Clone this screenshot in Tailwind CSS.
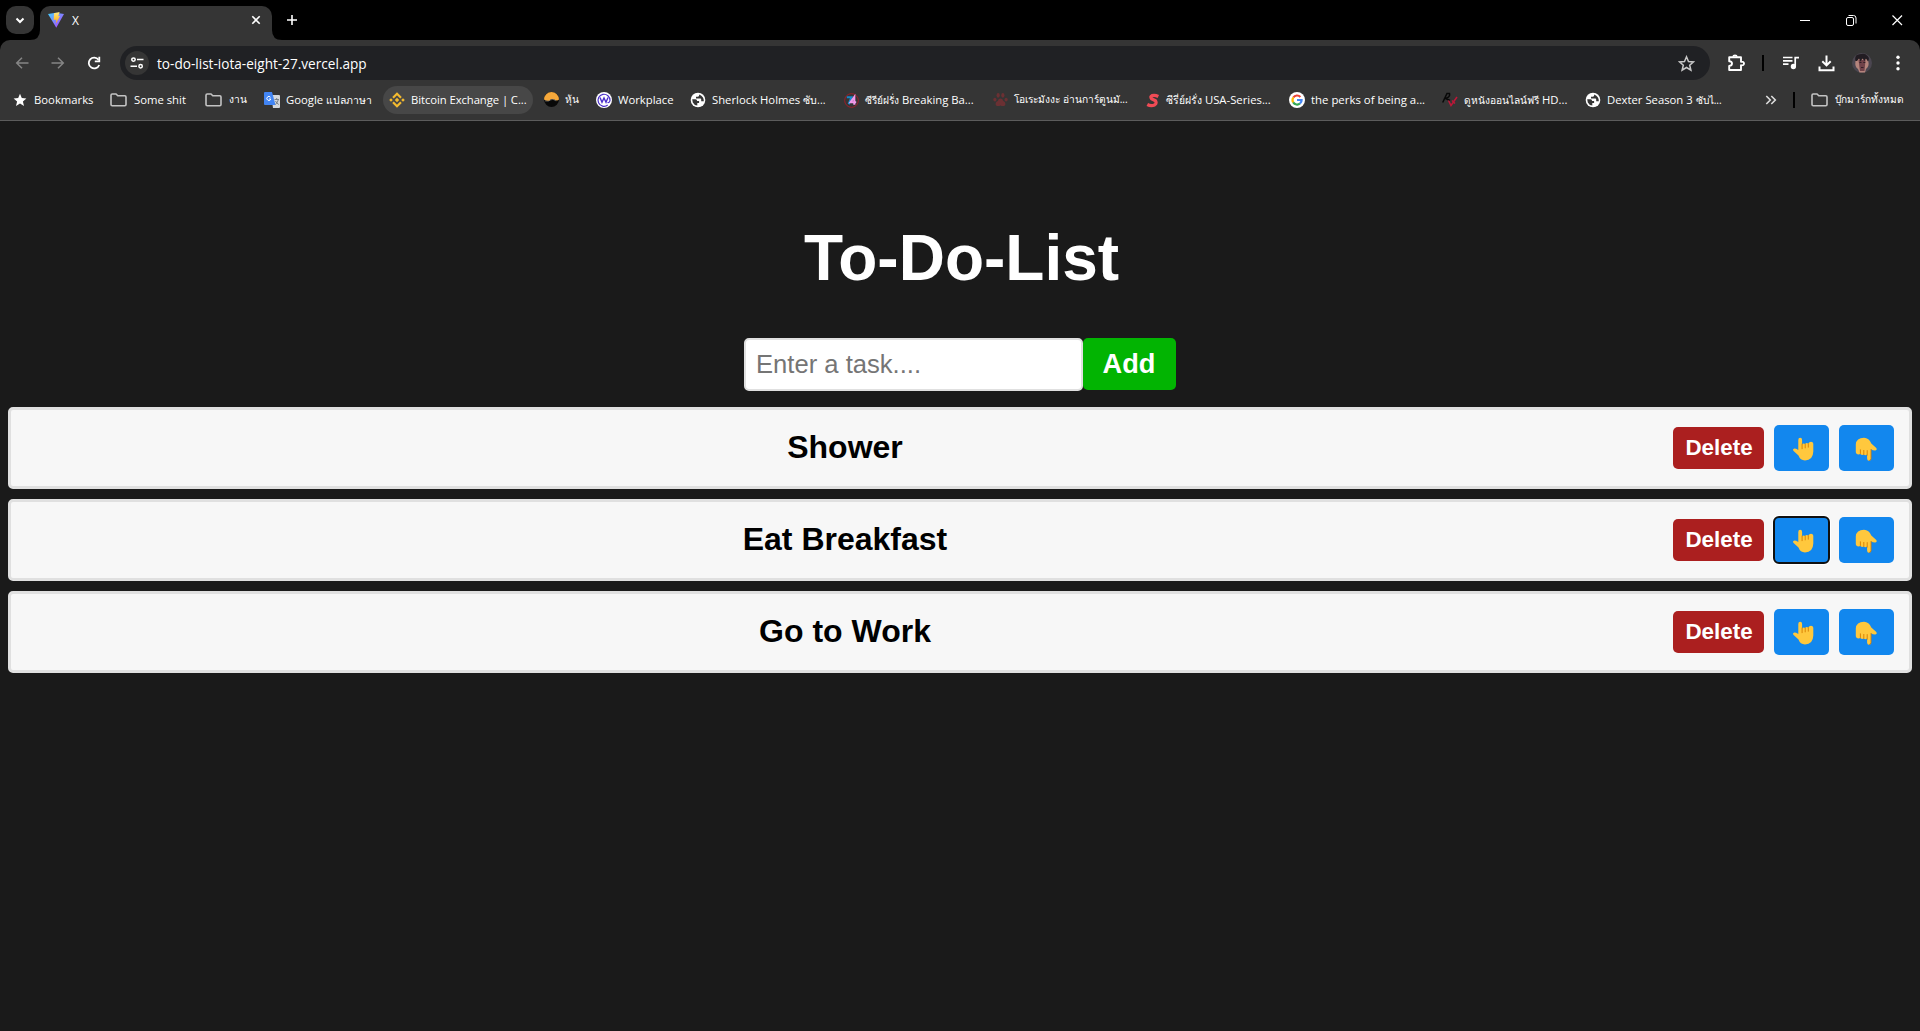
<!DOCTYPE html>
<html lang="th">
<head>
<meta charset="utf-8">
<title>X</title>
<script src="https://cdn.jsdelivr.net/npm/@tailwindcss/browser@4"></script>
</head>
<body class="flex h-[1031px] w-[1920px] flex-col overflow-hidden bg-[#1a1a1a] font-['Liberation_Sans',Arial,sans-serif]">
<svg class="absolute h-0 w-0">
  <defs>
    <linearGradient id="va" x1="0" y1="0" x2="1" y2="1"><stop offset="0" stop-color="#41d1ff"/><stop offset="1" stop-color="#bd34fe"/></linearGradient>
    <linearGradient id="vb" x1="0" y1="0" x2="0" y2="1"><stop offset="0" stop-color="#ffea83"/><stop offset="1" stop-color="#ffa800"/></linearGradient>
    <symbol id="folder" viewBox="0 0 17 14"><path d="M1 2.2Q1 1 2.2 1H6L7.8 2.8H14.8Q16 2.8 16 4V11.5Q16 12.7 14.8 12.7H2.2Q1 12.7 1 11.5Z" fill="none" stroke="#c3c3c3" stroke-width="1.6"/></symbol>
    <symbol id="globe" viewBox="0 0 16 16"><circle cx="8" cy="8" r="7.3" fill="#fff"/><path d="M2.2 7.2h3.3q1.6 0 1.6 1.7h2v2H7.3v2.6Q4.2 13.4 2.8 10.500ZM9.300 2.600q0 2.200-1.600 2.200H6v1.800h4.300q.9 0 .9 1v1.600h2.600Q14 5 9.300 2.600Z" fill="#353535"/></symbol>
    <symbol id="hand-up" viewBox="0 0 22 24"><path d="M6.300 3Q6.300 .7 8.200 .7T10.100 3V7.500Q11.300 6 13 6.900 14.600 5.400 16.200 6.600 17.700 4.300 20 5Q21.400 5.300 21.300 7V14.500Q21 23.300 13 23.500 8.200 23.300 6.500 18.500L1.300 13.800Q.3 12 2.300 11.600 4 11.600 6.300 13Z" fill="#ffc83d"/><path d="M10.100 7v4.700M13.200 7v3.900M16.300 6.600v3.600" fill="none" stroke="#d67d00" stroke-width=".9" stroke-linecap="round"/></symbol>
    <symbol id="hand-down" viewBox="0 0 22 24"><path d="M.8 7.500Q1.300 .7 9 .7 14 .8 16.300 6.500L21.300 11Q22.500 13 20.300 13.500 18 13.600 16 12.200V21.500Q15.900 23.800 14 23.800T12.100 21.500V17.600Q10.200 19.100 8.700 17.600 6.800 18.600 5.300 17 3 18 1.300 16.500 .7 15.800 .8 14Z" fill="#ffc83d"/><path d="M12.200 18.200v-4.600M8.800 17.400v-4M5.400 16.500v-3.700M16 12.500V21.500Q15.900 23.500 14.500 23.500" fill="none" stroke="#d67d00" stroke-width=".9" stroke-linecap="round"/></symbol>
  </defs>
</svg>

<header class="flex flex-col bg-black font-['Open_Sans','Noto_Sans',sans-serif] text-white">
  <!-- tab strip -->
  <div class="flex h-10 items-start">
    <button class="mt-1.5 ml-1.5 flex size-7 items-center justify-center rounded-[10px] bg-[#353535]"><svg class="size-3" viewBox="0 0 12 12" fill="none" stroke="#fff" stroke-width="2"><path d="M2.500 4.500 6 8l3.500-3.500"/></svg></button>
    <svg class="mt-[30px] ml-[-4px] h-2.5 w-2.5 self-start" viewBox="0 0 10 10"><path d="M10 0V10H0Q10 10 10 0Z" fill="#353535"/></svg>
    <div class="mt-1.5 flex h-[34px] w-[232px] items-center rounded-t-[10px] bg-[#353535] pl-2 pr-[9px] pb-1.5">
      <svg class="h-4 w-4" viewBox="0 0 16 16"><path d="M0 2 8 .8 16 2 8.300 15.700Z" fill="url(#va)"/><path d="M6 1.200 11.600 0 10.300 4.300 12 4 8 11.500 8.300 7.500 5.700 8Z" fill="url(#vb)"/></svg>
      <span class="ml-2 pt-px text-xs">X</span>
      <svg class="ml-auto size-3.5" viewBox="0 0 14 14" fill="none" stroke="#fff" stroke-width="1.600"><path d="M3.300 3.300l7.400 7.400M10.700 3.300l-7.400 7.400"/></svg>
    </div>
    <svg class="mt-[30px] h-2.5 w-2.5" viewBox="0 0 10 10"><path d="M0 0V10H10Q0 10 0 0Z" fill="#353535"/></svg>
    <svg class="mt-[14px] ml-1 size-3" viewBox="0 0 12 12" fill="none" stroke="#fff" stroke-width="1.600"><path d="M6 1v10M1 6h10"/></svg>
    <div class="mt-[13px] mr-4 ml-auto flex items-center gap-8">
      <svg class="size-3.5" viewBox="0 0 14 14" fill="none" stroke="#fff"><path d="M2 7.500h10"/></svg>
      <svg class="size-3.5" viewBox="0 0 14 14" fill="none" stroke="#fff"><rect x="2.500" y="4.500" width="7" height="8" rx="1.500"/><path d="M4.500 2.500h5q2.500 0 2.500 2.500v5.500"/></svg>
      <svg class="size-3.5" viewBox="0 0 14 14" fill="none" stroke="#fff" stroke-width="1.200"><path d="M2.500 2.500l9.500 9.500M12 2.500l-9.500 9.500"/></svg>
    </div>
  </div>

  <!-- toolbar -->
  <div class="flex h-[46px] items-center rounded-t-[10px] bg-[#353535] pl-[15px]">
    <svg class="size-3.5" viewBox="0 0 14 14" fill="none" stroke="#858585" stroke-width="1.500"><path d="M13.500 7H1.800M7 1.700 1.700 7 7 12.300"/></svg>
    <svg class="ml-[22px] size-3.5" viewBox="0 0 14 14" fill="none" stroke="#858585" stroke-width="1.500"><path d="M.500 7H12.200M7 1.700 12.300 7 7 12.300"/></svg>
    <svg class="ml-[22px] size-3.5" viewBox="0 0 14 14" fill="none" stroke="#fff" stroke-width="1.800"><path d="M12.200 9A5.400 5.400 0 1 1 11.500 3.800"/><path d="M12.300 .800V5.300H7.800" /></svg>
    <div class="ml-[19px] flex h-[34px] w-[1590px] items-center rounded-full bg-[#202124] pl-[5px] pr-[15px]">
      <span class="flex size-6 items-center justify-center rounded-full bg-[#353535]"><svg class="size-3.5" viewBox="0 0 14 14" fill="none" stroke="#fff" stroke-width="1.500"><circle cx="3.500" cy="3.600" r="1.700"/><path d="M7 3.600h6.500M.500 10.200H7"/><circle cx="10.600" cy="10.200" r="1.700"/></svg></span>
      <span class="ml-2 pt-0.5 text-[13.600px] whitespace-nowrap">to-do-list-iota-eight-27.vercel.app</span>
      <svg class="ml-auto size-[17px]" viewBox="0 0 17 17" fill="none" stroke="#c7c7c7" stroke-width="1.500"><path d="M8.500 1.800 10.500 6.500 15.500 6.900 11.700 10.200 12.900 15.200 8.500 12.500 4.100 15.200 5.300 10.200 1.500 6.900 6.500 6.500Z"/></svg>
    </div>
    <svg class="ml-[17px] size-[18px]" viewBox="0 0 18 18" fill="none" stroke="#fff" stroke-width="1.900"><path d="M2.200 3.300H14V7.800Q17 7.400 17 9.500T14 11.300V16H2.200V12Q5 11.800 5 9.600T2.200 7.300Z" stroke-linejoin="round"/><path d="M6.200 2.800Q6.300 1.400 8 1.400T9.800 2.800"/></svg>
    <span class="ml-[17px] h-4 w-0.5 bg-black"></span>
    <svg class="ml-[18px] h-4 w-[17px]" viewBox="0 0 17 16" fill="none" stroke="#fff" stroke-width="1.700"><path d="M1 2.500h9.500M1 5.800h9.500M1 9.100h5.500M13.200 11.500V2.600H17"/><circle cx="11.400" cy="11.500" r="1.800" fill="#fff"/></svg>
    <svg class="ml-[19px] h-[17px] w-[17px]" viewBox="0 0 17 17" fill="none" stroke="#fff" stroke-width="2"><path d="M8.500 .500V10.300M4.300 6.200 8.500 10.400 12.700 6.200M1.500 11.500V15.200H15.500V11.500"/></svg>
    <svg class="ml-[17px] size-5" viewBox="0 0 20 20"><circle cx="10" cy="10" r="10" fill="#4b4650"/><path d="M3.500 8Q2.500 14 6 16L7.500 19.500H13L14 16Q17.500 13.500 16.300 8 15 4.500 10 4.500T3.500 8Z" fill="#b5847c"/><path d="M6.500 7H13.500L12.500 18H8Z" fill="#704249"/><path d="M3.500 8Q2 2 7.500 1.300 13 -.500 15.500 3 18 5 16 8.500L14 5.500 12.500 8 10.500 5.500 8.500 8.500 7 5.500 5 8Z" fill="#221c22"/><path d="M7.500 9.500h2M11.300 9.500h2M9 14.500h2.500" stroke="#331f27"/></svg>
    <svg class="ml-6 h-4 w-1" viewBox="0 0 4 16" fill="#fff"><circle cx="2" cy="2.300" r="1.700"/><circle cx="2" cy="8" r="1.700"/><circle cx="2" cy="13.700" r="1.700"/></svg>
  </div>

  <!-- bookmarks bar -->
  <nav class="flex h-[35px] items-center border-b border-[#5c5c5c] bg-[#353535] pb-1.5 pl-[13px] text-[11.300px] whitespace-nowrap">
    <div class="flex w-[97px] items-center"><svg class="mr-[7px] size-[14px] shrink-0" viewBox="0 0 14 14"><path d="M7 .800 8.800 5.100 13.400 5.500 9.900 8.500 11 13 7 10.600 3 13 4.100 8.500 .600 5.500 5.200 5.100Z" fill="#fff"/></svg><span>Bookmarks</span></div>
    <div class="flex w-[95px] items-center"><svg class="mr-[7px] h-[14px] w-[17px] shrink-0"><use href="#folder"/></svg><span>Some shit</span></div>
    <div class="flex w-[59px] items-center"><svg class="mr-[7px] h-[14px] w-[17px] shrink-0"><use href="#folder"/></svg><span class="text-[10.200px]">งาน</span></div>
    <div class="flex w-[119px] items-center"><svg class="mr-1.5 size-4 shrink-0" viewBox="0 0 16 16"><path d="M7 3h8q1 0 1 1v11q0 1-1 1H9Z" fill="#d5d8dc"/><path d="M1 0H8L11.500 13H1Q0 13 0 12V1Q0 0 1 0Z" fill="#4285f4"/><path d="M6.500 5.300A2 2 0 1 0 6.800 7H5" fill="none" stroke="#fff"/><path d="M10.500 7.500h4.500M12.700 6v1.500M14.200 8q-.500 3-3 4.500M11.500 9q1 2.300 3.300 3.500" fill="none" stroke="#717980" stroke-width=".9"/></svg><span>Google <span class="text-[10.400px]">แปลภาษา</span></span></div>
    <div class="flex h-7 w-[150px] items-center rounded-full bg-[#474747] pl-1.5"><svg class="mr-1.5 size-4 shrink-0" viewBox="0 0 16 16"><g fill="none" stroke="#f3ba2f" stroke-width="2.200"><path d="M4 5.700 8 1.700 12 5.700M4 10.300 8 14.300 12 10.300"/></g><path d="M8 5.800 10.200 8 8 10.200 5.800 8ZM2 6.200 3.800 8 2 9.800 .200 8ZM14 6.200 15.800 8 14 9.800 12.200 8Z" fill="#f3ba2f"/></svg><span class="tracking-[-0.08px]">Bitcoin Exchange | C...</span></div>
    <div class="ml-[11px] flex w-[52px] items-center"><svg class="mr-1.5 size-[15px] shrink-0" viewBox="0 0 16 16"><circle cx="8" cy="8" r="8" fill="#080808"/><path d="M0 8A8 8 0 0 1 16 8Q14 10 11.500 8.300 8 6.500 6 9 3 10 0 8Z" fill="#f5a83b"/><path d="M1 9.500Q5 10.500 7 8.500T13 9.500" fill="none" stroke="#aaa" stroke-width=".5"/></svg><span class="text-[10.200px]">หุ้น</span></div>
    <div class="flex w-[94px] items-center"><svg class="mr-1.5 size-4 shrink-0" viewBox="0 0 16 16"><circle cx="8" cy="8" r="8" fill="#fff"/><path d="M11.700 13A6 6 0 1 1 14 8.500Q13.500 11 11.500 10.500" fill="none" stroke="#4b2fc9" stroke-width="1.200"/><path d="M4 5.500 6 10.300 8 6 10 10.300 12 5.500" fill="none" stroke="#4b2fc9" stroke-width="1.400"/></svg><span>Workplace</span></div>
    <div class="flex w-[154px] items-center"><svg class="mr-1.5 size-4 shrink-0"><use href="#globe"/></svg><span>Sherlock Holmes <span class="text-[10.600px]">ซับ...</span></span></div>
    <div class="flex w-[149px] items-center"><svg class="mr-[6px] size-[15px] shrink-0" viewBox="0 0 16 16"><circle cx="8" cy="8" r="7.300" fill="none" stroke="#a51d27" stroke-width="1"/><path d="M3 4.500H8L5 12" fill="none" stroke="#1688c7" stroke-width="2.200"/><path d="M11 12.500V4.300L7 9.800H13" fill="none" stroke="#f298e8" stroke-width="2.200"/></svg><span><span class="text-[10.200px]">ซีรีย์ฝรั่ง</span> Breaking Ba...</span></div>
    <div class="flex w-[153px] items-center"><svg class="mr-[6px] size-[15px] shrink-0" viewBox="0 0 16 16" fill="#6b3033"><ellipse cx="2" cy="8" rx="1.700" ry="2"/><ellipse cx="5.500" cy="3.500" rx="1.700" ry="2.500"/><ellipse cx="10.500" cy="3.500" rx="1.700" ry="2.500"/><ellipse cx="14" cy="8" rx="1.700" ry="2"/><path d="M8 7Q10 7 11 9.500 14 11 13 14 11 15.800 8 14.500 5 15.800 3 14 2 11 5 9.500 6 7 8 7Z"/></svg><span class="text-[10.200px]">โอเระมังงะ อ่านการ์ตูนมั...</span></div>
    <div class="flex w-[143px] items-center"><svg class="mr-[6px] h-[15px] w-[14px] shrink-0" viewBox="0 0 14 15"><path d="M12.300 3.500Q9 1.700 6 2.600 4 3.500 5.500 5.700L9.500 7.700Q11 10.500 8.500 12 5 13.500 1.300 11.500" fill="none" stroke="#f04b55" stroke-width="3.200"/></svg><span><span class="text-[10.400px]">ซีรี่ย์ฝรั่ง</span> USA-Series...</span></div>
    <div class="flex w-[153px] items-center"><svg class="mr-1.5 size-4 shrink-0" viewBox="0 0 16 16"><circle cx="8" cy="8" r="8" fill="#fff"/><g fill="none" stroke-width="2.200"><path d="M4.300 5.500A4.600 4.600 0 0 1 11.400 4.900" stroke="#ea4335"/><path d="M4.300 10.500A4.600 4.600 0 0 1 4.300 5.500" stroke="#fbbc05"/><path d="M4.200 10.400A4.600 4.600 0 0 0 11 11.500" stroke="#34a853"/><path d="M11 11.500Q12.700 10 12.600 8H8" stroke="#4285f4"/></g></svg><span class="text-[11.400px]">the perks of being a...</span></div>
    <div class="flex w-[143px] items-center"><svg class="mr-1.5 h-4 w-4 shrink-0" viewBox="0 0 16 16" fill="none" stroke-width="1.500"><path d="M.700 10.500 5 1.500H7.500Q8.500 5 3.500 6.500L8 8.500" stroke="#080808"/><path d="M6.500 8.500 9 13.500 15 5M10 8.500 13 11.500" stroke="#bd1738"/></svg><span><span class="text-[10.200px]">ดูหนังออนไลน์ฟรี</span> HD...</span></div>
    <div class="flex w-[180px] items-center"><svg class="mr-1.5 size-4 shrink-0"><use href="#globe"/></svg><span>Dexter Season 3 <span class="text-[10.200px]">ซับไ...</span></span></div>
    <svg class="h-3 w-3" viewBox="0 0 12 12" fill="none" stroke="#ddd" stroke-width="1.600"><path d="M1.300 2 5.300 6 1.300 10M6.300 2 10.300 6 6.300 10"/></svg>
    <span class="ml-4 h-4 w-0.5 bg-black"></span>
    <div class="ml-4 flex items-center"><svg class="mr-[7px] h-[14px] w-[17px] shrink-0"><use href="#folder"/></svg><span class="text-[10.200px]">บุ๊กมาร์กทั้งหมด</span></div>
  </nav>
</header>

<main class="flex flex-col px-2 text-center">
  <h1 class="mt-[101px] h-[73px] pl-[3px] text-[64px] leading-[73px] font-bold text-white">To-Do-List</h1>
  <div class="mt-[43px] flex items-start justify-center">
    <input type="text" placeholder="Enter a task...." class="h-[53px] w-[339px] rounded-[5px] border-2 border-[#e0e0e0] bg-white px-2.5 text-[25.600px] placeholder:text-[#757575]">
    <button class="h-[52px] w-[93px] rounded-[5px] bg-[#02b402] pr-px text-[27.200px] font-bold text-white">Add</button>
  </div>
  <ol class="mt-4 flex flex-col gap-2.5">
    <li class="flex h-[82px] items-center gap-2.5 rounded-[5px] border-[3px] border-[#e0e0e0] bg-[#f7f7f7] px-[15px]">
      <span class="flex-1 pb-0.5 pl-px text-[32px] leading-[38px] font-bold text-black">Shower</span>
      <button class="h-[42px] w-[91px] rounded-[5px] bg-[#ab1f1f] pl-px text-[22.400px] font-bold text-white">Delete</button>
      <button class="flex h-[46px] w-[55px] items-center justify-center rounded-[5px] bg-[#1287ee] pt-0.5 pl-[3px]"><svg class="h-6 w-[22px]"><use href="#hand-up"/></svg></button>
      <button class="flex h-[46px] w-[55px] items-center justify-center rounded-[5px] bg-[#1287ee] pt-0.5 pr-px"><svg class="h-6 w-[22px]"><use href="#hand-down"/></svg></button>
    </li>
    <li class="flex h-[82px] items-center gap-2.5 rounded-[5px] border-[3px] border-[#e0e0e0] bg-[#f7f7f7] px-[15px]">
      <span class="flex-1 pb-0.5 pl-px text-[32px] leading-[38px] font-bold text-black">Eat Breakfast</span>
      <button class="h-[42px] w-[91px] rounded-[5px] bg-[#ab1f1f] pl-px text-[22.400px] font-bold text-white">Delete</button>
      <button class="flex h-[46px] w-[55px] items-center justify-center rounded-[5px] bg-[#1287ee] pt-0.5 pl-[3px] outline-2 -outline-offset-1 outline-[#101010] ring-2 ring-white"><svg class="h-6 w-[22px]"><use href="#hand-up"/></svg></button>
      <button class="flex h-[46px] w-[55px] items-center justify-center rounded-[5px] bg-[#1287ee] pt-0.5 pr-px"><svg class="h-6 w-[22px]"><use href="#hand-down"/></svg></button>
    </li>
    <li class="flex h-[82px] items-center gap-2.5 rounded-[5px] border-[3px] border-[#e0e0e0] bg-[#f7f7f7] px-[15px]">
      <span class="flex-1 pb-0.5 pl-px text-[32px] leading-[38px] font-bold text-black">Go to Work</span>
      <button class="h-[42px] w-[91px] rounded-[5px] bg-[#ab1f1f] pl-px text-[22.400px] font-bold text-white">Delete</button>
      <button class="flex h-[46px] w-[55px] items-center justify-center rounded-[5px] bg-[#1287ee] pt-0.5 pl-[3px]"><svg class="h-6 w-[22px]"><use href="#hand-up"/></svg></button>
      <button class="flex h-[46px] w-[55px] items-center justify-center rounded-[5px] bg-[#1287ee] pt-0.5 pr-px"><svg class="h-6 w-[22px]"><use href="#hand-down"/></svg></button>
    </li>
  </ol>
</main>
</body>
</html>
